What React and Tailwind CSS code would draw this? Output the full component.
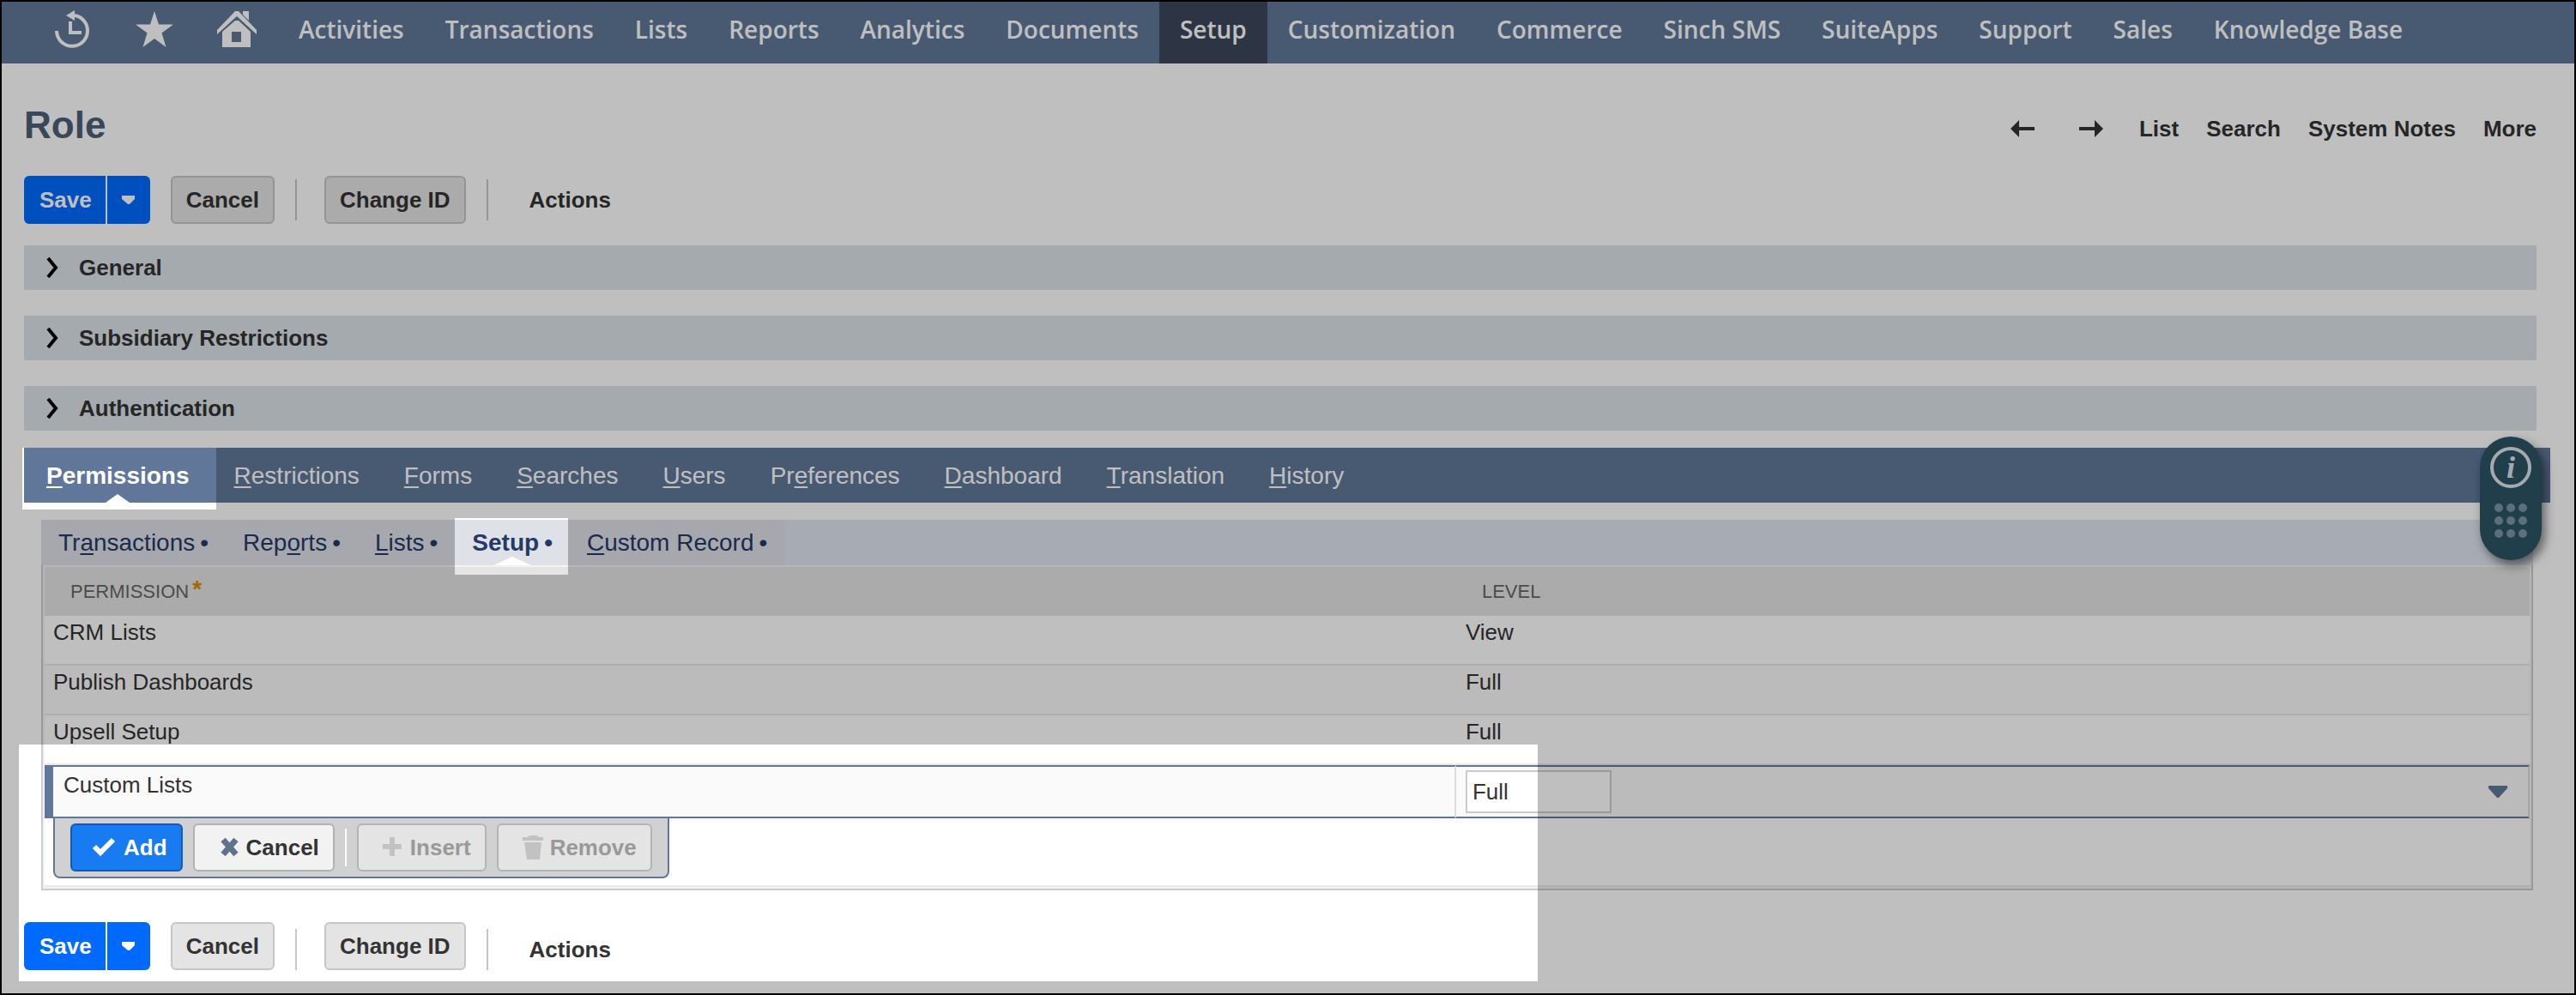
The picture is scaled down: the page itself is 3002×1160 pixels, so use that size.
import { clsx } from "clsx";

const navItems = [
  "Activities",
  "Transactions",
  "Lists",
  "Reports",
  "Analytics",
  "Documents",
  "Setup",
  "Customization",
  "Commerce",
  "Sinch SMS",
  "SuiteApps",
  "Support",
  "Sales",
  "Knowledge Base",
];

const sections = ["General", "Subsidiary Restrictions", "Authentication"];

// hotkey = index of the underlined letter
const tabs = [
  { label: "Permissions", hotkey: 0, active: true },
  { label: "Restrictions", hotkey: 0 },
  { label: "Forms", hotkey: 0 },
  { label: "Searches", hotkey: 0 },
  { label: "Users", hotkey: 0 },
  { label: "Preferences", hotkey: 2 },
  { label: "Dashboard", hotkey: 0 },
  { label: "Translation", hotkey: 0 },
  { label: "History", hotkey: 0 },
];

const subTabs = [
  { label: "Transactions", hotkey: 2 },
  { label: "Reports", hotkey: 3 },
  { label: "Lists", hotkey: 0 },
  { label: "Setup", hotkey: -1, active: true },
  { label: "Custom Record", hotkey: 0 },
];

const permissions = [
  { name: "CRM Lists", level: "View" },
  { name: "Publish Dashboards", level: "Full" },
  { name: "Upsell Setup", level: "Full" },
];

function HotkeyLabel({ label, hotkey }) {
  if (hotkey < 0) return label;

  return (
    <>
      {label.slice(0, hotkey)}
      <span className="underline decoration-2 underline-offset-3">
        {label[hotkey]}
      </span>
      {label.slice(hotkey + 1)}
    </>
  );
}

function TopNav() {
  return (
    <header className="flex h-[72px] bg-[#607799] pl-[62px] text-white">
      <div className="flex items-start gap-[50px] pt-[10px]">
        <button type="button" aria-label="Recent records">
          <svg width="44" height="46" viewBox="0 0 44 46" fill="none">
            <path
              d="M2 24A18 18 0 1 0 23 6"
              stroke="currentColor"
              strokeWidth="4"
            />
            <path d="M13 6L23 0V12Z" fill="currentColor" />
            <path d="M18 13V26H31" stroke="currentColor" strokeWidth="4" />
          </svg>
        </button>
        <button type="button" aria-label="Shortcuts">
          <svg width="44" height="46" viewBox="0 0 44 46" fill="currentColor">
            <path d="M22 1L27 16.500H44L30.500 26.500L35.500 43L22 33L8.500 43L13.500 26.500L0 16.500H17Z" />
          </svg>
        </button>
        <button type="button" aria-label="Home">
          <svg width="48" height="46" viewBox="0 0 48 46" fill="currentColor">
            <path d="M1 28V23L22 1H26L47 23V28L24 7Z" />
            <path d="M31 1H38V12L31 5Z" />
            <path
              fillRule="evenodd"
              d="M22 12H26L40 25V43H7V25ZM18 25V37H29V25Z"
            />
          </svg>
        </button>
      </div>
      <nav className="ml-6 flex font-['Open_Sans',sans-serif] text-[28px] leading-[38px] font-semibold">
        {navItems.map((item) => (
          <a
            key={item}
            href="#"
            className={clsx(
              "px-6 pt-[13px] whitespace-nowrap",
              item === "Setup" && "bg-[#3c475d]"
            )}
          >
            {item}
          </a>
        ))}
      </nav>
    </header>
  );
}

function PageLinks() {
  return (
    <div className="flex items-center pt-2 text-[26px] leading-8 font-bold">
      <button type="button" aria-label="Previous" className="mr-[52px]">
        <svg width="28" height="20" viewBox="0 0 28 20" fill="currentColor">
          <path d="M0 10L10 0V8H28V12H10V20Z" />
        </svg>
      </button>
      <button type="button" aria-label="Next" className="mr-[42px]">
        <svg width="28" height="20" viewBox="0 0 28 20" fill="currentColor">
          <path d="M28 10L18 0V8H0V12H18V20Z" />
        </svg>
      </button>
      <div className="flex gap-8">
        <a href="#">List</a>
        <a href="#">Search</a>
        <a href="#">System Notes</a>
        <a href="#">More</a>
      </div>
    </div>
  );
}

function ActionBar({ footer }) {
  const greyButton =
    "h-14 rounded-md border-2 border-[#c6c6c6] bg-[#e4e4e4] px-4";
  const separator = clsx("h-12 w-[2px] bg-[#c6c6c6]", !footer && "mb-1");

  return (
    <div className="flex items-end text-[26px] leading-8 font-bold">
      <div className="flex h-14 gap-[2px] text-white">
        <button
          type="button"
          className="rounded-l-md bg-[#006aff] pr-4 pl-[18px]"
        >
          Save
        </button>
        <button
          type="button"
          aria-label="Save options"
          className="rounded-r-md bg-[#006aff] px-4"
        >
          <svg width="18" height="10" viewBox="0 0 18 10" fill="currentColor">
            <path d="M1 0H16V4L10 10H8L1 4Z" />
          </svg>
        </button>
      </div>
      <button type="button" className={clsx(greyButton, "ml-6")}>
        Cancel
      </button>
      <div className={clsx(separator, "ml-6")} />
      <button type="button" className={clsx(greyButton, "ml-8")}>
        Change ID
      </button>
      <div className={clsx(separator, "ml-6")} />
      <button
        type="button"
        className={clsx("ml-12 h-14", footer && "pt-2")}
      >
        Actions
      </button>
    </div>
  );
}

function SectionHeader({ title }) {
  return (
    <button
      type="button"
      className="flex h-[52px] w-full items-center bg-[#dde3e8] pl-[25px] text-left text-[26px] leading-8 font-bold"
    >
      <svg width="16" height="26" viewBox="0 0 16 26" fill="none">
        <path d="M3 2L12 13L3 24" stroke="#000" strokeWidth="4" />
      </svg>
      <span className="ml-[23px]">{title}</span>
    </button>
  );
}

function MainTabs() {
  return (
    <nav className="-mr-4 flex h-16 gap-[52px] bg-[#607799] pl-[26px] text-[28px] leading-[66px] text-white">
      {tabs.map((tab) => (
        <a
          key={tab.label}
          href="#"
          className={clsx("relative", tab.active && "font-bold")}
        >
          <HotkeyLabel label={tab.label} hotkey={tab.hotkey} />
          {tab.active && (
            <svg
              className="absolute bottom-0 left-1/2 -translate-x-1/2"
              width="28"
              height="10"
              viewBox="0 0 28 10"
            >
              <path d="M14 0L28 10H0Z" fill="#fff" />
            </svg>
          )}
        </a>
      ))}
    </nav>
  );
}

function SubTabs() {
  return (
    <nav className="flex h-[53px] bg-[#dfe5ef] text-[28px] leading-[54px] text-[#233a66]">
      <div className="flex gap-10 bg-[#dfe1e9] px-5">
        {subTabs.map((tab) => (
          <a
            key={tab.label}
            href="#"
            className={clsx("relative flex gap-[6px]", tab.active && "font-bold")}
          >
            <span>
              <HotkeyLabel label={tab.label} hotkey={tab.hotkey} />
            </span>
            <span>•</span>
            {tab.active && (
              <svg
                className="absolute bottom-0 left-1/2 -translate-x-1/2"
                width="44"
                height="10"
                viewBox="0 0 44 10"
              >
                <path d="M22 0L44 10H0Z" fill="#fff" />
              </svg>
            )}
          </a>
        ))}
      </div>
    </nav>
  );
}

function RowToolbar() {
  const base =
    "flex h-14 items-center rounded-md border-2 px-4 text-[26px] leading-8 font-bold";
  const disabled = "border-[#b4b4b4] bg-[#e4e4e4] text-[#999]";

  return (
    <div className="ml-[10px] flex w-fit items-center gap-3 rounded-b-lg border-2 border-t-0 border-[#607799] bg-[#d1d1d1] px-[18px] py-[6px]">
      <button
        type="button"
        className={clsx(base, "border-[#125ab2] bg-[#187bf2] text-white")}
      >
        <svg width="44" height="32" viewBox="0 0 44 32" fill="none">
          <path d="M10 15L17 22L32 7" stroke="currentColor" strokeWidth="6" />
        </svg>
        Add
      </button>
      <button
        type="button"
        className={clsx(base, "border-[#b2b2b2] bg-[#f2f2f2]")}
      >
        <svg width="44" height="32" viewBox="0 0 44 32" fill="none">
          <path
            d="M17 7L32 24M32 7L17 24"
            stroke="#5f738f"
            strokeWidth="7"
          />
        </svg>
        Cancel
      </button>
      <div className="h-11 w-[2px] bg-white" />
      <button type="button" disabled className={clsx(base, disabled)}>
        <svg width="44" height="32" viewBox="0 0 44 32" fill="none">
          <path d="M23 4V26M12 15H34" stroke="#c2c2c2" strokeWidth="6" />
        </svg>
        Insert
      </button>
      <button type="button" disabled className={clsx(base, disabled)}>
        <svg width="44" height="32" viewBox="0 0 44 32" fill="#c2c2c2">
          <path d="M12 4H18L20 2H29L31 4H36V8H12ZM14 10H34L32 30H17Z" />
        </svg>
        Remove
      </button>
    </div>
  );
}

function PermissionTable() {
  return (
    <div className="border-2 border-t-0 border-[#ccc]">
      <div className="border-2 border-[#f3f3f3]">
        <table className="w-full table-fixed border-separate border-spacing-0 text-left text-[26px] leading-7">
          <thead>
            <tr className="h-[57px] bg-[#e4e4e4] text-[22px] text-[#666]">
              <th className="w-[56.8%] p-0 pl-[30px] font-normal">
                <span className="flex items-start">
                  PERMISSION
                  <span className="ml-1 h-7 text-[28px] leading-[22px] font-bold text-[#d98c00]">
                    *
                  </span>
                </span>
              </th>
              <th className="p-0 pl-[30px] font-normal">LEVEL</th>
            </tr>
          </thead>
          <tbody>
            {permissions.map((row, i) => (
              <tr
                key={row.name}
                className={clsx("h-[58px]", i % 2 === 1 && "bg-[#fafafa]")}
              >
                <td className="border-b-2 border-[#eaeaea] p-0 pt-[5px] pl-[10px] align-top">
                  {row.name}
                </td>
                <td className="border-b-2 border-[#eaeaea] p-0 pt-[5px] pl-[11px] align-top">
                  {row.level}
                </td>
              </tr>
            ))}
            <tr className="h-[62px] bg-[#fafafa]">
              <td className="border-y-2 border-r-2 border-l-10 border-y-[#607799] border-r-[#ddd] border-l-[#607799] p-0 pt-[7px] pl-3 align-top">
                Custom Lists
              </td>
              <td className="border-y-2 border-r-2 border-y-[#607799] border-r-[#ddd] p-0 pl-[11px]">
                <div className="flex items-center justify-between pr-[23px]">
                  <input
                    type="text"
                    aria-label="Level"
                    defaultValue="Full"
                    className="h-[50px] w-[170px] border-2 border-[#ccc] bg-white px-[6px]"
                  />
                  <button type="button" aria-label="Show levels">
                    <svg width="24" height="16" viewBox="0 0 24 16">
                      <path
                        d="M1 1H23V4L13 15H11L1 4Z"
                        fill="#607799"
                      />
                    </svg>
                  </button>
                </div>
              </td>
            </tr>
          </tbody>
        </table>
        <RowToolbar />
        <div className="mt-2 h-[2px] bg-[#eaeaea]" />
      </div>
    </div>
  );
}

function HelpWidget() {
  return (
    <div className="absolute top-[507px] right-[38px] flex h-36 w-[72px] flex-col items-center rounded-full bg-[#2c5365] pt-3 shadow-[4px_6px_12px_rgba(0,0,0,0.5)]">
      <button
        type="button"
        aria-label="Help"
        className="h-12 w-12 rounded-full border-4 border-[#dce3e6] font-['Liberation_Serif',serif] text-[36px] leading-[38px] font-bold text-[#dce3e6] italic"
      >
        i
      </button>
      <div className="mt-[18px] grid grid-cols-3 gap-x-1 gap-y-[5px]">
        {Array.from({ length: 9 }, (_, i) => (
          <span key={i} className="h-[10px] w-[10px] rounded-full bg-[#7b96a4]" />
        ))}
      </div>
    </div>
  );
}

// Dims the page, leaving the active tabs and the edited row lit.
function Spotlight() {
  return (
    <div className="pointer-events-none absolute inset-0 bg-black/25 [clip-path:polygon(evenodd,0_0,100%_0,100%_100%,0_100%,0_0,24px_520px,250px_520px,250px_592px,24px_592px,24px_520px,0_0,528px_602px,660px_602px,660px_668px,528px_668px,528px_602px,0_0,20px_866px,1790px_866px,1790px_1142px,20px_1142px,20px_866px,0_0)]" />
  );
}

export default function App() {
  return (
    <div className="relative min-h-screen border-2 border-black bg-white font-['Liberation_Sans',Arial,sans-serif] text-[#333]">
      <TopNav />
      <main className="pr-11 pb-[27px] pl-[26px]">
        <div className="flex items-center justify-between pt-[46px]">
          <h1 className="text-[44px] leading-[52px] font-bold text-[#4d5f79]">
            Role
          </h1>
          <PageLinks />
        </div>
        <div className="mt-[33px]">
          <ActionBar />
        </div>
        <div className="mt-[25px] space-y-[30px]">
          {sections.map((title) => (
            <SectionHeader key={title} title={title} />
          ))}
        </div>
        <div className="mt-5">
          <MainTabs />
        </div>
        <div className="mt-5 mr-1 ml-5">
          <SubTabs />
          <PermissionTable />
        </div>
        <div className="mt-[37px]">
          <ActionBar footer />
        </div>
      </main>
      <HelpWidget />
      <Spotlight />
    </div>
  );
}
